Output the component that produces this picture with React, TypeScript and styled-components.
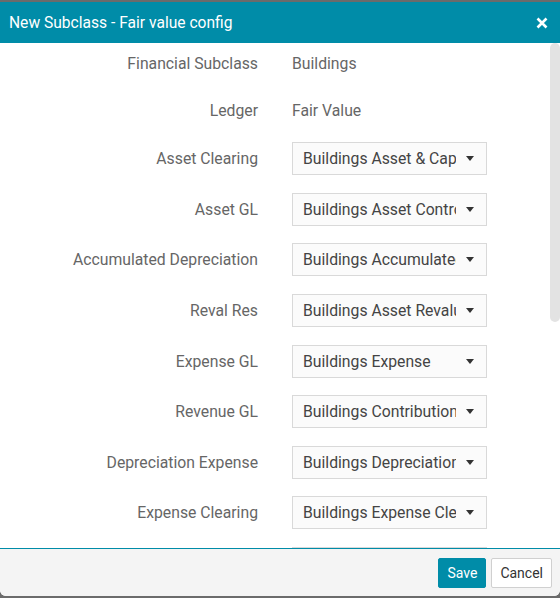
import React from 'react';
import styled, { createGlobalStyle } from 'styled-components';

interface Field {
    label: string;
    value: string;
    editable?: boolean;
}

const fields: Field[] = [
    { label: 'Financial Subclass', value: 'Buildings' },
    { label: 'Ledger', value: 'Fair Value' },
    { label: 'Asset Clearing', value: 'Buildings Asset & Capital Clearing', editable: true },
    { label: 'Asset GL', value: 'Buildings Asset Control', editable: true },
    { label: 'Accumulated Depreciation', value: 'Buildings Accumulated Depreciation', editable: true },
    { label: 'Reval Res', value: 'Buildings Asset Revaluation Reserve', editable: true },
    { label: 'Expense GL', value: 'Buildings Expense', editable: true },
    { label: 'Revenue GL', value: 'Buildings Contributions Revenue', editable: true },
    { label: 'Depreciation Expense', value: 'Buildings Depreciation Expense', editable: true },
    { label: 'Expense Clearing', value: 'Buildings Expense Clearing', editable: true },
    { label: 'Revenue Clearing', value: 'Buildings Revenue Clearing', editable: true }
];

// visible share of the form, in px of the rail
const THUMB_HEIGHT = 279;

const GlobalStyle = createGlobalStyle`
    html, body {
        margin: 0;
        padding: 0;
        background: #6b6b6b;
    }
    body {
        font-family: Roboto, "Liberation Sans", sans-serif;
    }
`;

const Dialog = styled.div`
    margin-top: 2px;
    width: 560px;
    height: 594px;
    display: flex;
    flex-direction: column;
    background: #fff;
    border-radius: 0 0 6px 6px;
    overflow: hidden;
`;

const Header = styled.header`
    height: 41px;
    flex: none;
    display: flex;
    align-items: center;
    justify-content: space-between;
    padding: 0 10px 0 9px;
    background: #008ca8;
    color: #fff;
`;

const Title = styled.h1`
    margin: 0;
    font-size: 15.6px;
    font-weight: 400;
`;

const CloseButton = styled.button`
    border: 0;
    padding: 0;
    background: none;
    width: 16px;
    height: 16px;
    display: flex;
    align-items: center;
    justify-content: center;
    cursor: pointer;
`;

const Body = styled.div`
    flex: 1;
    min-height: 0;
    display: flex;
`;

const Content = styled.div`
    flex: 1;
    overflow: hidden;
    padding-top: 6px;
`;

const ScrollRail = styled.div`
    width: 10px;
    flex: none;
    background: #fff;
`;

const ScrollThumb = styled.div`
    background: #e3e3e3;
    border-radius: 5px;
`;

const Form = styled.div`
    display: grid;
    grid-template-columns: 258px 195px;
    column-gap: 34px;
    row-gap: 17.6px;
`;

const Label = styled.div<{ $static?: boolean }>`
    height: ${(p) => (p.$static ? 29 : 33)}px;
    display: flex;
    align-items: center;
    justify-content: flex-end;
    font-size: 15.75px;
    color: #666;
    white-space: nowrap;
`;

const StaticValue = styled.div`
    height: 29px;
    display: flex;
    align-items: center;
    font-size: 15.75px;
    color: #666;
`;

const Select = styled.div`
    box-sizing: border-box;
    height: 33px;
    display: flex;
    align-items: center;
    padding: 0 12px 0 10px;
    border: 1px solid #d9d9d9;
    background: #fbfbfb;
    font-size: 15.75px;
    color: #444;
`;

const SelectText = styled.span`
    flex: 1;
    overflow: hidden;
    white-space: nowrap;
    margin-right: 10px;
`;

const Footer = styled.footer`
    height: 47px;
    flex: none;
    display: flex;
    align-items: center;
    justify-content: flex-end;
    gap: 5px;
    padding: 0 8px;
    border-top: 1px solid #008ca8;
    background: #f4f4f4;
`;

const Button = styled.button<{ $primary?: boolean }>`
    height: 30px;
    padding: 0 8px;
    font-family: inherit;
    font-size: 14px;
    border: 1px solid ${(p) => (p.$primary ? '#008ca8' : '#d0d0d0')};
    background: ${(p) => (p.$primary ? '#008ca8' : '#fff')};
    color: ${(p) => (p.$primary ? '#fff' : '#333')};
    border-radius: 2px;
    cursor: pointer;
`;

function Caret() {
    return (
        <svg width="8" height="5" viewBox="0 0 8 5">
            <path d="M0 0h8L4 5z" fill="#333" />
        </svg>
    );
}

function renderField(field: Field) {
    return (
        <React.Fragment key={field.label}>
            <Label $static={!field.editable}>{field.label}</Label>
            {field.editable ? (
                <Select>
                    <SelectText>{field.value}</SelectText>
                    <Caret />
                </Select>
            ) : (
                <StaticValue>{field.value}</StaticValue>
            )}
        </React.Fragment>
    );
}

export default function App() {
    return (
        <>
            <GlobalStyle />
            <Dialog>
                <Header>
                    <Title>New Subclass - Fair value config</Title>
                    <CloseButton aria-label="Close">
                        <svg width="12" height="12" viewBox="0 0 12 12">
                            <path d="M1.5 1.5l9 9M10.5 1.5l-9 9" stroke="#fff" strokeWidth="2.6" />
                        </svg>
                    </CloseButton>
                </Header>
                <Body>
                    <Content>
                        <Form>{fields.map(renderField)}</Form>
                    </Content>
                    <ScrollRail>
                        <ScrollThumb style={{ height: THUMB_HEIGHT }} />
                    </ScrollRail>
                </Body>
                <Footer>
                    <Button $primary>Save</Button>
                    <Button>Cancel</Button>
                </Footer>
            </Dialog>
        </>
    );
}
